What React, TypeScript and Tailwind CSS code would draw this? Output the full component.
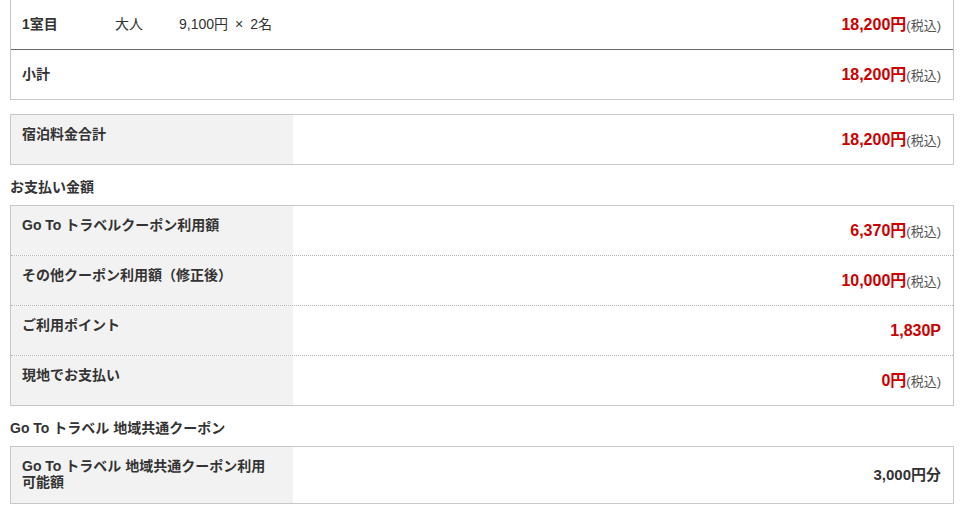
import React from 'react';

const font = { fontFamily: '"Liberation Sans", "Noto Sans CJK JP", sans-serif' };

const Price: React.FC<{ value: string; unit?: string; tax?: boolean }> = ({ value, unit = '円', tax = true }) => (
  <span className="whitespace-nowrap">
    <span className="text-[16px] font-bold text-[#cc0000]">{value}{unit}</span>
    {tax && <span className="text-[13px] text-[#555]">(税込)</span>}
  </span>
);

interface Row {
  label: string;
  amount: React.ReactNode;
}

const LabelTable: React.FC<{ rows: Row[]; tall?: boolean }> = ({ rows, tall }) => (
  <div className="border border-[#c8c8c8]">
    {rows.map((row, i) => (
      <div
        key={row.label}
        className={`flex ${tall ? 'min-h-[56px]' : i === 0 ? 'h-[49px]' : 'h-[50px]'} ${i > 0 ? 'border-t border-dotted border-[#b5b5b5]' : ''}`}
      >
        <div className="w-[282px] shrink-0 bg-[#f2f2f2] pl-[11px] pr-[16px] pt-[11px] pb-[12px] text-[14px] font-bold leading-[16px] text-[#333]">
          {row.label}
        </div>
        <div className="flex flex-1 items-center justify-end pr-[12px]">{row.amount}</div>
      </div>
    ))}
  </div>
);

const payments: Row[] = [
  { label: 'Go To トラベルクーポン利用額', amount: <Price value="6,370" /> },
  { label: 'その他クーポン利用額（修正後）', amount: <Price value="10,000" /> },
  { label: 'ご利用ポイント', amount: <Price value="1,830" unit="P" tax={false} /> },
  { label: '現地でお支払い', amount: <Price value="0" /> },
];

export default function App() {
  return (
    <div className="min-h-[513px] bg-white px-[10px] text-[#333]" style={font}>
      {/* 客室明細 */}
      <div className="-mt-px border border-[#c8c8c8]">
        <div className="flex h-[50px] items-center border-b border-[#666] pl-[11px] pr-[12px] text-[14px]">
          <span className="w-[93px] font-bold">1室目</span>
          <span className="w-[64px]">大人</span>
          <span>9,100円<span className="mx-[7px]">×</span>2名</span>
          <span className="ml-auto"><Price value="18,200" /></span>
        </div>
        <div className="flex h-[49px] items-center pl-[11px] pr-[12px] text-[14px]">
          <span className="font-bold">小計</span>
          <span className="ml-auto"><Price value="18,200" /></span>
        </div>
      </div>

      <div className="mt-[14px]">
        <LabelTable rows={[{ label: '宿泊料金合計', amount: <Price value="18,200" /> }]} />
      </div>

      <h3 className="mt-[13px] mb-[9px] text-[14px] font-bold leading-[18px]">お支払い金額</h3>
      <LabelTable rows={payments} />

      <h3 className="mt-[13px] mb-[9px] text-[14px] font-bold leading-[18px]">Go To トラベル 地域共通クーポン</h3>
      <LabelTable
        tall
        rows={[
          {
            label: 'Go To トラベル 地域共通クーポン利用可能額',
            amount: <span className="text-[15px] font-bold text-[#333]">3,000円分</span>,
          },
        ]}
      />
    </div>
  );
}
